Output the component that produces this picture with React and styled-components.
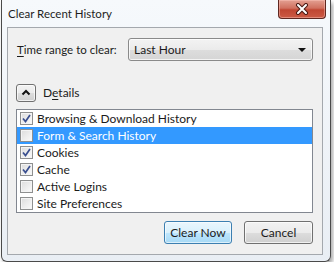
import React from "react";
import styled, { createGlobalStyle } from "styled-components";

const GlobalStyle = createGlobalStyle`
  * { box-sizing: border-box; }
  body {
    margin: 0;
    background: #ffffff;
    font-family: Lato, "Open Sans", sans-serif;
    font-size: 12px;
    color: #1b1b1b;
  }
`;

const Window = styled.div`
  width: 330px;
  height: 262px;
  margin-left: 1px;
  border: 1px solid #4a4a4a;
  border-top: none;
  border-radius: 0 0 6px 6px;
  background: linear-gradient(#f6f9fc, #e9eef4);
  box-shadow: 2px 3px 4px rgba(0, 0, 0, 0.35);
  display: flex;
  flex-direction: column;
  padding: 0 7px 6px 5px;
`;

const TitleBar = styled.div`
  height: 27px;
  display: flex;
  align-items: flex-start;
  justify-content: space-between;
`;

const Title = styled.div`
  font-size: 11.5px;
  margin-top: 7px;
  margin-left: 1px;
  color: #1e1e1e;
`;

const CloseButton = styled.div`
  width: 48px;
  height: 19px;
  margin-right: -3px;
  border: 1px solid #5e2720;
  border-top: none;
  border-radius: 0 0 4px 4px;
  background: linear-gradient(#e3a092 0%, #d0705f 45%, #c04632 55%, #cb5a45 100%);
  box-shadow: inset 0 0 0 1px rgba(255, 200, 190, 0.45);
  display: flex;
  align-items: center;
  justify-content: center;
`;

const Content = styled.div`
  flex: 1;
  border: 1px solid #a4a8ad;
  background: #f0f0f0;
  padding: 10px 9px 10px 8px;
  display: flex;
  flex-direction: column;
`;

const RangeRow = styled.div`
  display: flex;
  align-items: center;
  height: 23px;
`;

const Label = styled.span`
  margin-left: 1px;
  width: 111px;
  font-size: 11.5px;
`;

const Key = styled.span`
  text-decoration: underline;
  text-underline-offset: 2px;
`;

const Select = styled.div`
  flex: 1;
  height: 23px;
  border: 1px solid #8a8a8a;
  border-radius: 3px;
  background: linear-gradient(#f3f3f3 0%, #ebebeb 50%, #dddddd 51%, #d5d5d5 100%);
  box-shadow: inset 0 0 0 1px rgba(255, 255, 255, 0.7);
  display: flex;
  align-items: center;
  justify-content: space-between;
  padding: 0 6px 0 5px;
`;

const Arrow = styled.span`
  width: 0;
  height: 0;
  border-left: 4px solid transparent;
  border-right: 4px solid transparent;
  border-top: 4px solid #111;
  margin-top: 1px;
`;

const DetailsRow = styled.div`
  display: flex;
  align-items: center;
  gap: 7px;
  margin-top: 23px;
  height: 17px;
`;

const ToggleButton = styled.div`
  width: 20px;
  height: 18px;
  border: 1px solid #707070;
  border-radius: 3px;
  background: linear-gradient(#f2f2f2 0%, #ebebeb 50%, #dddddd 51%, #cfcfcf 100%);
  box-shadow: inset 0 0 0 1px rgba(255, 255, 255, 0.7);
  display: flex;
  align-items: center;
  justify-content: center;
`;

const List = styled.div`
  margin-top: 8px;
  border: 1px solid #828790;
  background: #ffffff;
  display: flex;
  flex-direction: column;
`;

const Row = styled.div`
  height: 17px;
  display: flex;
  align-items: center;
  gap: 4px;
  padding-left: 3px;
  background: ${({ selected }) => (selected ? "#3399ff" : "transparent")};
  color: ${({ selected }) => (selected ? "#ffffff" : "#1b1b1b")};
`;

const Box = styled.span`
  width: 13px;
  height: 13px;
  border: 1px solid #8e8f8f;
  background: linear-gradient(135deg, #dcdcdc, #fbfbfb);
  box-shadow: inset 0 0 0 1px #f4f4f4;
  display: flex;
  align-items: center;
  justify-content: center;
`;

const Footer = styled.div`
  margin-top: auto;
  display: flex;
  justify-content: flex-end;
  gap: 12px;
`;

const Button = styled.div`
  width: ${({ w }) => w}px;
  height: 23px;
  border: 1px solid ${({ primary }) => (primary ? "#3c7fb1" : "#707070")};
  border-radius: 3px;
  background: ${({ primary }) =>
    primary
      ? "linear-gradient(#eaf6fd 0%, #d9f0fc 50%, #bee6fd 51%, #a7d9f5 100%)"
      : "linear-gradient(#f2f2f2 0%, #ebebeb 50%, #dddddd 51%, #cfcfcf 100%)"};
  box-shadow: inset 0 0 0 1px
    ${({ primary }) => (primary ? "rgba(255,255,255,0.6)" : "rgba(255,255,255,0.7)")};
  display: flex;
  align-items: center;
  justify-content: center;
`;

const items = [
  { label: "Browsing & Download History", checked: true },
  { label: "Form & Search History", checked: false, selected: true },
  { label: "Cookies", checked: true },
  { label: "Cache", checked: true },
  { label: "Active Logins", checked: false },
  { label: "Site Preferences", checked: false },
];

function Check() {
  return (
    <svg width="9" height="9" viewBox="0 0 9 9">
      <path d="M1 4.5 L3.5 7.5 L8 1" fill="none" stroke="#3a4f8f" strokeWidth="1.7" />
    </svg>
  );
}

export default function App() {
  return (
    <>
      <GlobalStyle />
      <Window>
        <TitleBar>
          <Title>Clear Recent History</Title>
          <CloseButton>
            <svg width="14" height="12" viewBox="0 0 14 12">
              <path d="M3 2 L11 10 M11 2 L3 10" stroke="#4a1a14" strokeWidth="4" strokeLinecap="round" />
              <path d="M3 2 L11 10 M11 2 L3 10" stroke="#ffffff" strokeWidth="2" strokeLinecap="round" />
            </svg>
          </CloseButton>
        </TitleBar>
        <Content>
          <RangeRow>
            <Label>
              <Key>T</Key>ime range to clear:
            </Label>
            <Select>
              Last Hour
              <Arrow />
            </Select>
          </RangeRow>
          <DetailsRow>
            <ToggleButton>
              <svg width="10" height="7" viewBox="0 0 10 7">
                <path d="M1.5 5.5 L5 2 L8.5 5.5" fill="none" stroke="#111" strokeWidth="2" />
              </svg>
            </ToggleButton>
            <span>
              D<Key>e</Key>tails
            </span>
          </DetailsRow>
          <List>
            {items.map((it) => (
              <Row key={it.label} selected={it.selected}>
                <Box>{it.checked && <Check />}</Box>
                {it.label}
              </Row>
            ))}
          </List>
          <Footer>
            <Button primary w={68}>Clear Now</Button>
            <Button w={69}>Cancel</Button>
          </Footer>
        </Content>
      </Window>
    </>
  );
}
